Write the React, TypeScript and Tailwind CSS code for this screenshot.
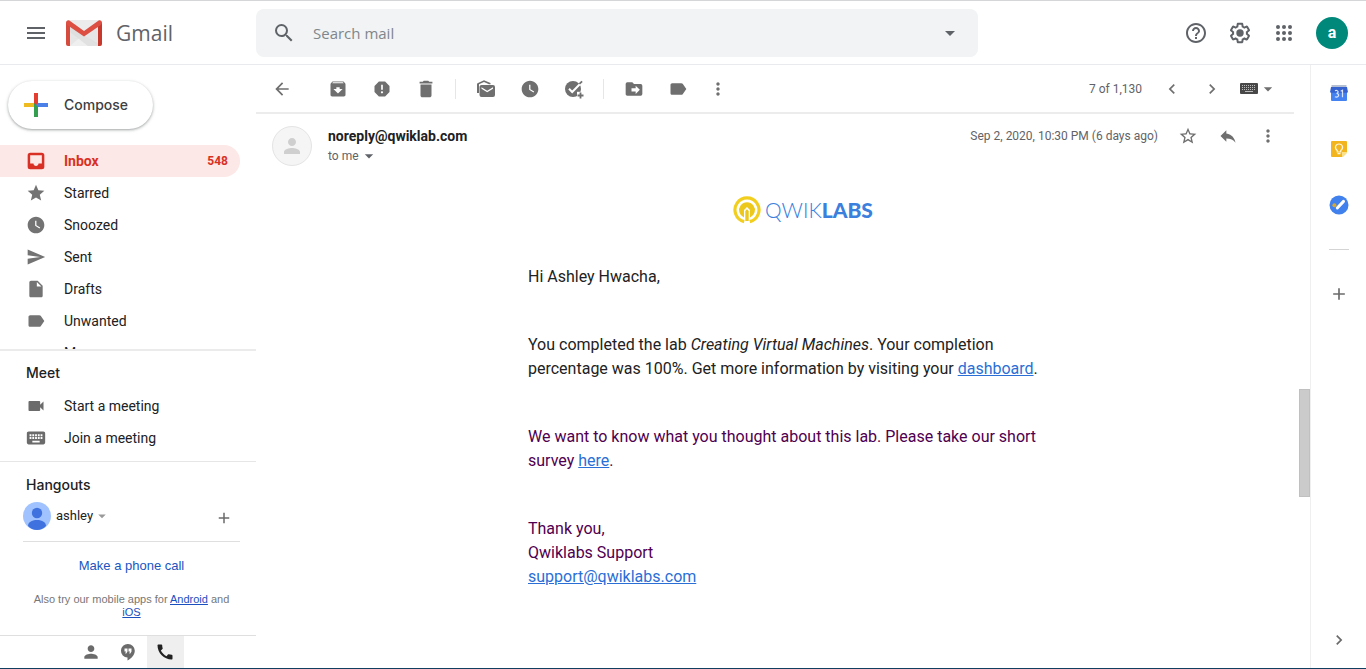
import type { ReactNode } from "react";
import {
  MdAdd,
  MdArchive,
  MdArrowBack,
  MdArrowDropDown,
  MdCall,
  MdChevronLeft,
  MdChevronRight,
  MdDelete,
  MdHelpOutline,
  MdInsertDriveFile,
  MdKeyboard,
  MdLabel,
  MdMenu,
  MdMoreVert,
  MdPerson,
  MdReply,
  MdReport,
  MdSearch,
  MdSend,
  MdStar,
  MdStarBorder,
  MdVideocam,
  MdWatchLater,
} from "react-icons/md";

function GmailLogo() {
  return (
    <svg viewBox="0 0 36 26" className="h-[26px] w-9" aria-hidden="true">
      <path d="M3 0h30v26H3z" fill="#e6e6e6" />
      <path d="M4 26 18 14l14 12z" fill="#efefef" />
      <path d="m4 4 14 11L36 26H22L4 12z" fill="#dcdcdc" opacity=".7" />
      <path d="M3 0h30L18 11z" fill="#ececec" />
      <path d="M0 2.5V24a2 2 0 0 0 2 2h2V5.5z" fill="#d54b3d" />
      <path d="M36 2.5V24a2 2 0 0 1-2 2h-2V5.5z" fill="#c7392c" />
      <path d="M0 2.6C0 .6 2 -.5 3.7.7L18 11 32.3.7C34 -.5 36 .6 36 2.6c0 1-.4 1.700-1.200 2.300L18 16.500 1.200 4.900C.4 4.300 0 3.600 0 2.600z" fill="#dd4f43" />
    </svg>
  );
}

function ComposePlus() {
  return (
    <svg viewBox="0 0 24 24" className="size-6" aria-hidden="true">
      <path d="M10 0h4v12h-4z" fill="#e33e2f" />
      <path d="M14 10h10v4H10z" fill="#4a80e8" />
      <path d="M0 10h10v4H0z" fill="#eebb20" />
      <path d="M10 14h4v10h-4z" fill="#34a04f" />
      <path d="M10 10v4h4z" fill="#34a04f" />
    </svg>
  );
}

function AppsIcon() {
  return (
    <svg viewBox="0 0 24 24" className="size-6" fill="currentColor" aria-hidden="true">
      {[6, 12, 18].map((y) => [6, 12, 18].map((x) => <circle key={`${x}-${y}`} cx={x} cy={y} r="2" />))}
    </svg>
  );
}

function InboxIcon() {
  return (
    <svg viewBox="0 0 24 24" className="size-5" fill="currentColor" aria-hidden="true">
      <path d="M19 2H5a3 3 0 0 0-3 3v14a3 3 0 0 0 3 3h14a3 3 0 0 0 3-3V5a3 3 0 0 0-3-3zm0 13h-4c0 1.700-1.300 3-3 3s-3-1.300-3-3H5V5h14z" />
    </svg>
  );
}

function MarkUnreadIcon() {
  return (
    <svg viewBox="0 0 20 20" className="size-5" fill="currentColor" aria-hidden="true">
      <path d="M1 14V5.500C1 4.700 1.300 4.300 2 4l6-2.800L14.500 4v1.200H13L8 3 3 5.200V14z" />
      <path fillRule="evenodd" d="M5.500 6H17a2 2 0 0 1 2 2v8a2 2 0 0 1-2 2H5.500a2 2 0 0 1-2-2V8c0-1.100.9-2 2-2zm0 2.200v1.500l5.700 3.600 5.800-3.600V8.200l-5.800 3.500z" />
    </svg>
  );
}

function AddTaskIcon() {
  return (
    <svg viewBox="0 0 20 20" className="size-5" fill="none" aria-hidden="true">
      <circle cx="9" cy="10" r="8" fill="currentColor" />
      <path d="m5 9.800 3.200 3.200L18 3" stroke="#fff" strokeWidth="2" />
      <path d="m14.800 4.300 2.700-2.600 1.200 1.200-2.700 2.600z" fill="currentColor" />
      <path d="M13 12.800h7V20h-7z" fill="#fff" />
      <path d="M16.500 13.500v6M13.500 16.500h6" stroke="currentColor" strokeWidth="1.800" />
    </svg>
  );
}

function MoveToIcon() {
  return (
    <svg viewBox="0 0 24 24" className="size-5" fill="currentColor" aria-hidden="true">
      <path fillRule="evenodd" d="M20 6h-8l-2-2H4a2 2 0 0 0-2 2v12c0 1.100.9 2 2 2h16a2 2 0 0 0 2-2V8a2 2 0 0 0-2-2zm-6 12v-3H9v-4h5V8l5 5z" />
    </svg>
  );
}

function GearIcon() {
  return (
    <svg viewBox="0 0 24 24" className="size-6" aria-hidden="true">
      <path
        d="M13.850 22.250h-3.700c-.74 0-1.360-.54-1.450-1.270l-.27-1.890c-.27-.14-.53-.29-.79-.46l-1.800.72c-.7.26-1.470-.03-1.810-.65L2.200 15.530c-.35-.66-.2-1.440.36-1.880l1.530-1.190c-.01-.15-.02-.3-.02-.46 0-.15.010-.31.020-.46l-1.520-1.190c-.59-.45-.74-1.260-.37-1.880l1.850-3.190c.34-.62 1.110-.9 1.790-.63l1.810.73c.26-.17.52-.32.78-.46l.27-1.910c.09-.7.710-1.250 1.440-1.250h3.700c.74 0 1.360.54 1.450 1.270l.27 1.890c.27.14.53.29.79.46l1.800-.72c.71-.26 1.480.03 1.820.65l1.840 3.180c.36.66.2 1.440-.36 1.880l-1.520 1.190c.01.15.020.3.020.46s-.01.31-.02.46l1.520 1.190c.56.45.720 1.230.370 1.860l-1.860 3.220c-.34.62-1.110.9-1.800.63l-1.800-.72c-.26.17-.52.32-.78.46l-.27 1.910c-.1.680-.72 1.220-1.460 1.220zm-3.230-2h2.760l.37-2.550.53-.22c.44-.18.880-.44 1.340-.78l.45-.34 2.380.96 1.380-2.400-2.030-1.580.07-.56c.03-.26.060-.51.060-.78s-.03-.53-.06-.78l-.07-.56 2.030-1.580-1.390-2.400-2.390.96-.45-.35c-.42-.32-.87-.58-1.330-.77l-.52-.22-.37-2.550h-2.760l-.37 2.550-.53.21c-.44.19-.88.44-1.340.79l-.45.33-2.380-.95-1.390 2.390 2.030 1.580-.07.56a7 7 0 0 0-.06.79c0 .26.020.53.060.78l.07.56-2.030 1.580 1.380 2.400 2.390-.96.45.35c.43.330.86.580 1.330.77l.53.22z"
        fill="currentColor"
      />
      <circle cx="12" cy="12" r="3.700" fill="currentColor" />
    </svg>
  );
}

function InputToolIcon() {
  return (
    <svg viewBox="0 0 18 11" className="h-[11px] w-[18px]" aria-hidden="true">
      <rect width="18" height="11" rx="1" fill="#484848" />
      <path d="M2 2.500h14M2 4.500h14M2 6.500h14" stroke="#bbb" strokeWidth="1" strokeDasharray="1 1" />
      <path d="M5 8.500h8" stroke="#bbb" strokeWidth="1" />
    </svg>
  );
}

function HangoutsIcon() {
  return (
    <svg viewBox="0 0 16 18" className="h-[18px] w-4" aria-hidden="true">
      <path d="M8 1a6.800 6.800 0 0 0-.5 13.600V17.500c3.700-1.800 7.300-5.300 7.300-9.700A6.800 6.800 0 0 0 8 1z" fill="currentColor" />
      <path d="M4.500 5.500h3v3L6.300 10.500H5.200L6 8.500H4.500zM8.500 5.500h3v3l-1.200 2H9.200l.8-2H8.500z" fill="#fff" />
    </svg>
  );
}

function UserAvatar() {
  return (
    <svg viewBox="0 0 28 28" className="size-7" aria-hidden="true">
      <circle cx="14" cy="14" r="14" fill="#a0c3ff" />
      <circle cx="14" cy="11" r="5.200" fill="#3f72de" />
      <path d="M5 24c0-3.500 3.500-6 9-6s9 2.500 9 6c-2.400 2.500-5.500 4-9 4s-6.600-1.500-9-4z" fill="#3f72de" />
    </svg>
  );
}

function CalendarIcon() {
  return (
    <svg viewBox="0 0 18 18" className="size-[18px]" aria-hidden="true">
      <path d="M1.500 1h15v4h-15z" fill="#b4bfd4" />
      <path d="M1 3h16v6H1z" fill="#3460c9" />
      <path d="M1 8.500h16V16a1 1 0 0 1-1 1H2a1 1 0 0 1-1-1z" fill="#4582f1" />
      <path d="M1 3h16l1 5.500H0z" fill="#3562cf" />
      <path d="M5 6.800c2.800-1.500 4.400 1.900 1.600 2.600 3.500.4 2.200 4.700-1.700 3.400M10.700 7.200l1.800-.9v7" fill="none" stroke="#dbe7ff" strokeWidth="1.200" />
    </svg>
  );
}

function KeepIcon() {
  return (
    <svg viewBox="0 0 18 18" className="size-[18px]" aria-hidden="true">
      <path d="M2 1h14a1 1 0 0 1 1 1v10l-5 5H2a1 1 0 0 1-1-1V2a1 1 0 0 1 1-1z" fill="#f2b51d" />
      <path d="M17 12v1l-4 4h-1v-5z" fill="#fbe08a" />
      <path d="M7.300 10.500C4 8 5.500 4 9 4s5 4 1.700 6.500v1.500H7.300zM7.500 13.700h3" fill="none" stroke="#fff6da" strokeWidth="1.200" />
    </svg>
  );
}

function TasksIcon() {
  return (
    <svg viewBox="0 0 20 20" className="size-5" aria-hidden="true">
      <circle cx="10" cy="10" r="9.500" fill="#4081ee" />
      <circle cx="5.400" cy="10.300" r="2" fill="#d9a92c" />
      <path d="m8.300 13 6.200-6.600" stroke="#fff" strokeWidth="3" strokeLinecap="round" />
    </svg>
  );
}

function QwiklabsMark() {
  return (
    <svg viewBox="0 0 28 28" className="size-7" aria-hidden="true">
      <path d="M11.200 25.600a12 12 0 1 1 5.600 0" fill="none" stroke="#f2cf1f" strokeWidth="3.200" />
      <path d="M11 21.400a7.900 7.900 0 1 1 6 0V14l-3-3-3 3z" fill="#edc81c" />
      <path d="M12.300 25v-10l1.700-1.700 1.700 1.700v10z" fill="#edc81c" />
    </svg>
  );
}

function Tool({ label, children }: { label: string; children: ReactNode }) {
  return (
    <button type="button" aria-label={label} className="flex size-5 shrink-0 items-center justify-center text-[#6f6f6f]">
      {children}
    </button>
  );
}

const folders = [
  { name: "Starred", icon: <MdStar className="size-5" /> },
  { name: "Snoozed", icon: <MdWatchLater className="size-5" /> },
  { name: "Sent", icon: <MdSend className="size-5" /> },
  { name: "Drafts", icon: <MdInsertDriveFile className="size-5" /> },
  { name: "Unwanted", icon: <MdLabel className="size-5" /> },
  { name: "More", icon: null },
];

const meetings = [
  { name: "Start a meeting", icon: <MdVideocam className="size-5 shrink-0" /> },
  { name: "Join a meeting", icon: <MdKeyboard className="size-[22px] shrink-0" /> },
];

function Header() {
  return (
    <header className="flex h-16 shrink-0 items-center border-b border-[#e8eaed] text-[#5f6368]">
      <div className="flex w-64 shrink-0 items-center">
        <button type="button" aria-label="Main menu" className="ml-6">
          <MdMenu className="size-6" />
        </button>
        <a href="#inbox" className="ml-[18px] flex items-center gap-[14px]">
          <GmailLogo />
          <span className="font-['Open_Sans',sans-serif] text-[21px] leading-7">Gmail</span>
        </a>
      </div>
      <form className="flex h-12 max-w-[722px] flex-1 items-center rounded-lg bg-[#f1f3f4]">
        <button type="button" aria-label="Search" className="ml-4">
          <MdSearch className="size-6" />
        </button>
        <input
          type="text"
          aria-label="Search mail"
          placeholder="Search mail"
          className="ml-[17px] min-w-0 flex-1 bg-transparent font-['Open_Sans',sans-serif] text-[15px] leading-6 outline-none placeholder:text-[#80868b]"
        />
        <button type="button" aria-label="Search options" className="mr-4">
          <MdArrowDropDown className="size-6" />
        </button>
      </form>
      <div className="ml-auto flex items-center gap-5 pr-[18px]">
        <button type="button" aria-label="Support">
          <MdHelpOutline className="size-6" />
        </button>
        <button type="button" aria-label="Settings">
          <GearIcon />
        </button>
        <button type="button" aria-label="Google apps">
          <AppsIcon />
        </button>
        <button
          type="button"
          aria-label="Account"
          className="size-8 rounded-full bg-[#00897b] text-base leading-8 font-bold text-white"
        >
          a
        </button>
      </div>
    </header>
  );
}

function Sidebar() {
  return (
    <div className="flex w-64 shrink-0 flex-col">
      <nav className="min-h-0 flex-1 overflow-hidden pt-4">
        <button
          type="button"
          className="mb-4 ml-2 flex h-12 items-center gap-4 rounded-full pr-[25px] pl-4 font-['Inter',sans-serif] text-sm font-medium text-[#3c4043] shadow-[0_1px_2px_0_rgba(60,64,67,0.30),0_1px_3px_1px_rgba(60,64,67,0.15)]"
        >
          <ComposePlus />
          Compose
        </button>
        <a href="#inbox" className="mr-4 flex h-8 items-center rounded-r-full bg-[#fce8e6] pr-3 pl-[26px] font-bold text-[#d93025]">
          <InboxIcon />
          <span className="ml-[18px] flex-1 text-sm">Inbox</span>
          <span className="text-xs">548</span>
        </a>
        {folders.map((folder) => (
          <a key={folder.name} href={"#" + folder.name} className="flex h-8 items-center pl-[26px] text-sm text-[#202124]">
            <span className="w-[38px] text-[#737373]">{folder.icon}</span>
            {folder.name}
          </a>
        ))}
      </nav>

      <div className="shrink-0 border-t-2 border-[#ebebeb]">
        <section className="border-b border-[#e6e6e6] pt-3 pb-[7px]">
          <h2 className="mb-[7px] pl-[26px] font-['Inter',sans-serif] text-sm leading-5 font-medium text-[#202124]">Meet</h2>
          {meetings.map((item) => (
            <a key={item.name} href="#meet" className="flex h-8 items-center gap-[18px] pl-[26px] text-sm text-[#202124]">
              <span className="flex w-5 justify-center text-[#6b6b6b]">{item.icon}</span>
              {item.name}
            </a>
          ))}
        </section>
        <section className="pt-[13px]">
          <h2 className="mb-[7px] pl-[26px] font-['Inter',sans-serif] text-sm leading-5 font-medium text-[#202124]">Hangouts</h2>
          <div className="mr-4 ml-[23px] border-b border-[#dfdfdf] pb-[11px]">
            <div className="flex items-center">
              <UserAvatar />
              <button type="button" className="ml-[5px] flex items-center text-[13px] leading-5 text-[#202124]">
                ashley
                <MdArrowDropDown className="size-[18px] text-[#999]" />
              </button>
              <button type="button" aria-label="New conversation" className="ml-auto pt-1 pr-[7px] text-[#6b6b6b]">
                <MdAdd className="size-[18px]" />
              </button>
            </div>
          </div>
          <div className="mr-4 ml-[23px] px-1 pt-[14px] pb-4 text-center font-['Liberation_Sans',sans-serif]">
            <a href="#call" className="block text-[13px] leading-5 text-[#1a55c0]">
              Make a phone call
            </a>
            <p className="mt-[17px] text-[11px] leading-[13px] text-[#777]">
              Also try our mobile apps for{" "}
              <a href="#android" className="text-[#1a4fc0] underline">
                Android
              </a>{" "}
              and{" "}
              <a href="#ios" className="text-[#1a4fc0] underline">
                iOS
              </a>
            </p>
          </div>
        </section>
        <div className="flex h-[33px] justify-center border-t border-[#dfdfdf] text-[#6b6b6b]">
          <button type="button" aria-label="Contacts" className="flex w-[37px] items-center justify-center">
            <MdPerson className="size-5" />
          </button>
          <button type="button" aria-label="Conversations" className="flex w-[37px] items-center justify-center">
            <HangoutsIcon />
          </button>
          <button type="button" aria-label="Phone" className="flex w-[37px] items-center justify-center bg-[#efefef] text-[#222]">
            <MdCall className="size-5" />
          </button>
        </div>
      </div>
    </div>
  );
}

function Toolbar() {
  return (
    <div className="mr-4 flex h-[49px] shrink-0 items-center border-b-2 border-[#ececec] pr-4 pl-4">
      <Tool label="Back to Inbox"><MdArrowBack className="size-5" /></Tool>
      <div className="ml-9 flex gap-6">
        <Tool label="Archive"><MdArchive className="size-5" /></Tool>
        <Tool label="Report spam"><MdReport className="size-5" /></Tool>
        <Tool label="Delete"><MdDelete className="size-[22px] shrink-0" /></Tool>
      </div>
      <div className="mr-5 ml-[19px] h-5 w-px bg-[#e6e6e6]" />
      <div className="flex gap-6">
        <Tool label="Mark as unread"><MarkUnreadIcon /></Tool>
        <Tool label="Snooze"><MdWatchLater className="size-5" /></Tool>
        <Tool label="Add to Tasks"><AddTaskIcon /></Tool>
      </div>
      <div className="mr-5 ml-[19px] h-5 w-px bg-[#e6e6e6]" />
      <div className="flex gap-6">
        <Tool label="Move to"><MoveToIcon /></Tool>
        <Tool label="Labels"><MdLabel className="size-5" /></Tool>
      </div>
      <div className="ml-5 flex">
        <Tool label="More"><MdMoreVert className="size-5" /></Tool>
      </div>
      <div className="ml-auto flex items-center">
        <span className="mr-5 text-xs text-[#5f6368]">7 of 1,130</span>
        <div className="flex gap-5">
          <Tool label="Newer"><MdChevronLeft className="size-5" /></Tool>
          <Tool label="Older"><MdChevronRight className="size-5" /></Tool>
        </div>
        <button type="button" aria-label="Input tools" className="ml-[18px] flex items-center text-[#6f6f6f]">
          <InputToolIcon />
          <MdArrowDropDown className="size-5" />
        </button>
      </div>
    </div>
  );
}

function Message() {
  return (
    <article className="min-w-0 flex-1 pt-3 pr-8 pl-4">
      <div className="flex gap-4">
        <div className="flex size-10 shrink-0 items-center justify-center rounded-full border border-[#e4e4e4] bg-[#f5f5f5] text-[#cfcfcf]">
          <MdPerson className="size-6" />
        </div>
        <div className="min-w-0 flex-1">
          <div className="flex h-5 items-center">
            <h1 className="flex-1 text-sm font-bold text-[#202124]">noreply@qwiklab.com</h1>
            <time className="mr-5 text-xs text-[#5f6368]">Sep 2, 2020, 10:30 PM (6 days ago)</time>
            <div className="flex gap-5">
              <Tool label="Star"><MdStarBorder className="size-5" /></Tool>
              <Tool label="Reply"><MdReply className="size-5" /></Tool>
              <Tool label="More"><MdMoreVert className="size-5" /></Tool>
            </div>
          </div>
          <button type="button" className="flex h-5 items-center text-xs text-[#5f6368]">
            to me
            <MdArrowDropDown className="size-5" />
          </button>
          <div className="mx-auto mt-[30px] max-w-[550px] text-base leading-6 text-[#222]">
            <div className="mb-[41px] flex h-7 items-center justify-center gap-1 font-['Lato',sans-serif] text-[21px] leading-6 text-[#3b80dd]">
              <QwiklabsMark />
              <span>
                <span className="font-light">QWIK</span>
                <span className="font-black">LABS</span>
              </span>
            </div>
            <div className="flex flex-col gap-11 pr-6">
              <p>Hi Ashley Hwacha,</p>
              <p>
                You completed the lab <em>Creating Virtual Machines</em>. Your completion percentage was 100%. Get more
                information by visiting your{" "}
                <a href="#dashboard" className="text-[#2a6fd6] underline">
                  dashboard
                </a>
                .
              </p>
              <p className="text-[#500050]">
                We want to know what you thought about this lab. Please take our short survey{" "}
                <a href="#survey" className="text-[#2a6fd6] underline">
                  here
                </a>
                .
              </p>
              <p className="text-[#500050]">
                Thank you,
                <br />
                Qwiklabs Support
                <br />
                <a href="mailto:support@qwiklabs.com" className="text-[#2a6fd6] underline">
                  support@qwiklabs.com
                </a>
              </p>
            </div>
          </div>
        </div>
      </div>
    </article>
  );
}

function SidePanel() {
  return (
    <aside className="flex w-14 shrink-0 flex-col items-center border-l border-[#efefef] pt-[18px] pb-[18px] text-[#6b6b6b]">
      <button type="button" aria-label="Calendar" className="flex size-5 items-center justify-center">
        <CalendarIcon />
      </button>
      <button type="button" aria-label="Keep" className="mt-9 flex size-5 items-center justify-center">
        <KeepIcon />
      </button>
      <button type="button" aria-label="Tasks" className="mt-9 flex size-5 items-center justify-center">
        <TasksIcon />
      </button>
      <div className="mt-[34px] h-px w-5 bg-[#d4d4d4]" />
      <button type="button" aria-label="Get add-ons" className="mt-[34px]">
        <MdAdd className="size-5" />
      </button>
      <button type="button" aria-label="Hide side panel" className="mt-auto">
        <MdChevronRight className="size-5" />
      </button>
    </aside>
  );
}

export default function App() {
  return (
    <div className="flex h-screen flex-col overflow-hidden border-t border-b border-t-[#d5d6d8] border-b-[#123f5f] bg-white font-['Roboto',sans-serif]">
      <Header />
      <div className="flex min-h-0 flex-1">
        <Sidebar />
        <main className="flex min-w-0 flex-1 flex-col">
          <Toolbar />
          <div className="flex min-h-0 flex-1">
            <Message />
            <div className="-ml-[11px] flex w-[11px] shrink-0 flex-col">
              <div className="grow-[275] basis-0" />
              <div className="grow-[107] basis-0 border border-[#c0c0c0] bg-[#cbcbcb]" />
              <div className="grow-[171] basis-0" />
            </div>
          </div>
        </main>
        <SidePanel />
      </div>
    </div>
  );
}
